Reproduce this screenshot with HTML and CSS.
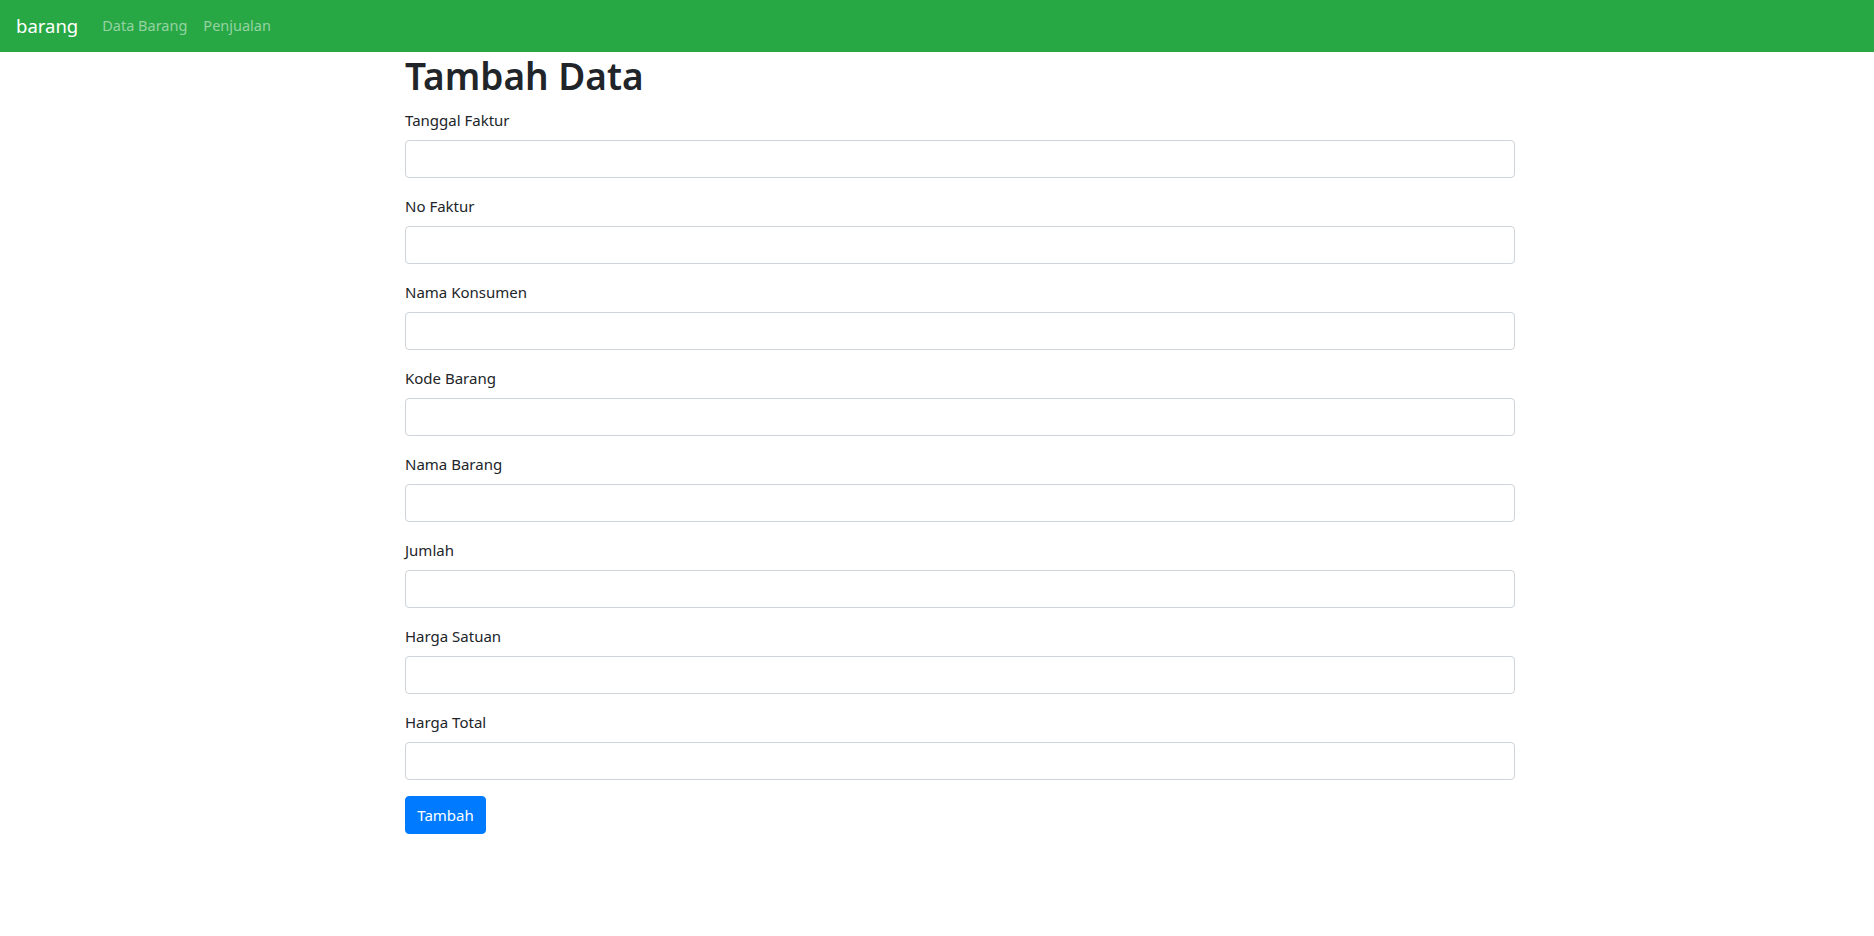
FILE: index.html
```html
<!DOCTYPE html>
<html lang="id">
<head>
<meta charset="utf-8">
<title>Tambah Data</title>
<link rel="stylesheet" href="styles.css">
</head>
<body>
<nav class="navbar">
  <a class="brand" href="#">barang</a>
  <a class="nav-link" href="#">Data Barang</a>
  <a class="nav-link" href="#">Penjualan</a>
</nav>
<main class="container">
  <h1 class="title">Tambah Data</h1>
  <form class="form">
    <div class="group"><label>Tanggal Faktur</label><input class="control" type="text"></div>
    <div class="group"><label>No Faktur</label><input class="control" type="text"></div>
    <div class="group"><label>Nama Konsumen</label><input class="control" type="text"></div>
    <div class="group"><label>Kode Barang</label><input class="control" type="text"></div>
    <div class="group"><label>Nama Barang</label><input class="control" type="text"></div>
    <div class="group"><label>Jumlah</label><input class="control" type="text"></div>
    <div class="group"><label>Harga Satuan</label><input class="control" type="text"></div>
    <div class="group"><label>Harga Total</label><input class="control" type="text"></div>
    <div><button class="btn" type="button">Tambah</button></div>
  </form>
</main>
</body>
</html>
```
FILE: styles.css
```css
* { box-sizing: border-box; }
body {
  margin: 0;
  font-family: "Segoe UI", "Noto Sans", "Open Sans", sans-serif;
  font-size: 16px;
  line-height: 1.5;
  color: #212529;
  background: #fff;
}
.navbar {
  height: 52px;
  background: #28a745;
  display: flex;
  align-items: center;
  padding: 0 16px;
}
.brand {
  color: #fff;
  font-size: 18.5px;
  text-decoration: none;
  margin-right: 16px;
}
.nav-link {
  color: rgba(255, 255, 255, 0.5);
  text-decoration: none;
  font-size: 14.5px;
  padding: 0 8px;
}
.container {
  width: 1110px;
  margin-left: 405px;
}
.title {
  margin: 0 0 8px;
  font-size: 37px;
  font-weight: 600;
  line-height: 48px;
}
.group {
  margin-bottom: 16px;
}
.group label {
  display: block;
  margin-bottom: 8px;
  font-size: 15px;
  line-height: 24px;
}
.control {
  display: block;
  width: 100%;
  height: 38px;
  border: 1px solid #ced4da;
  border-radius: 4px;
  padding: 6px 12px;
  font: inherit;
}
.btn {
  height: 38px;
  width: 81px;
  background: #007bff;
  color: #fff;
  border: 1px solid #007bff;
  border-radius: 4px;
  font: inherit;
  font-size: 15px;
  padding: 0;
}
```
